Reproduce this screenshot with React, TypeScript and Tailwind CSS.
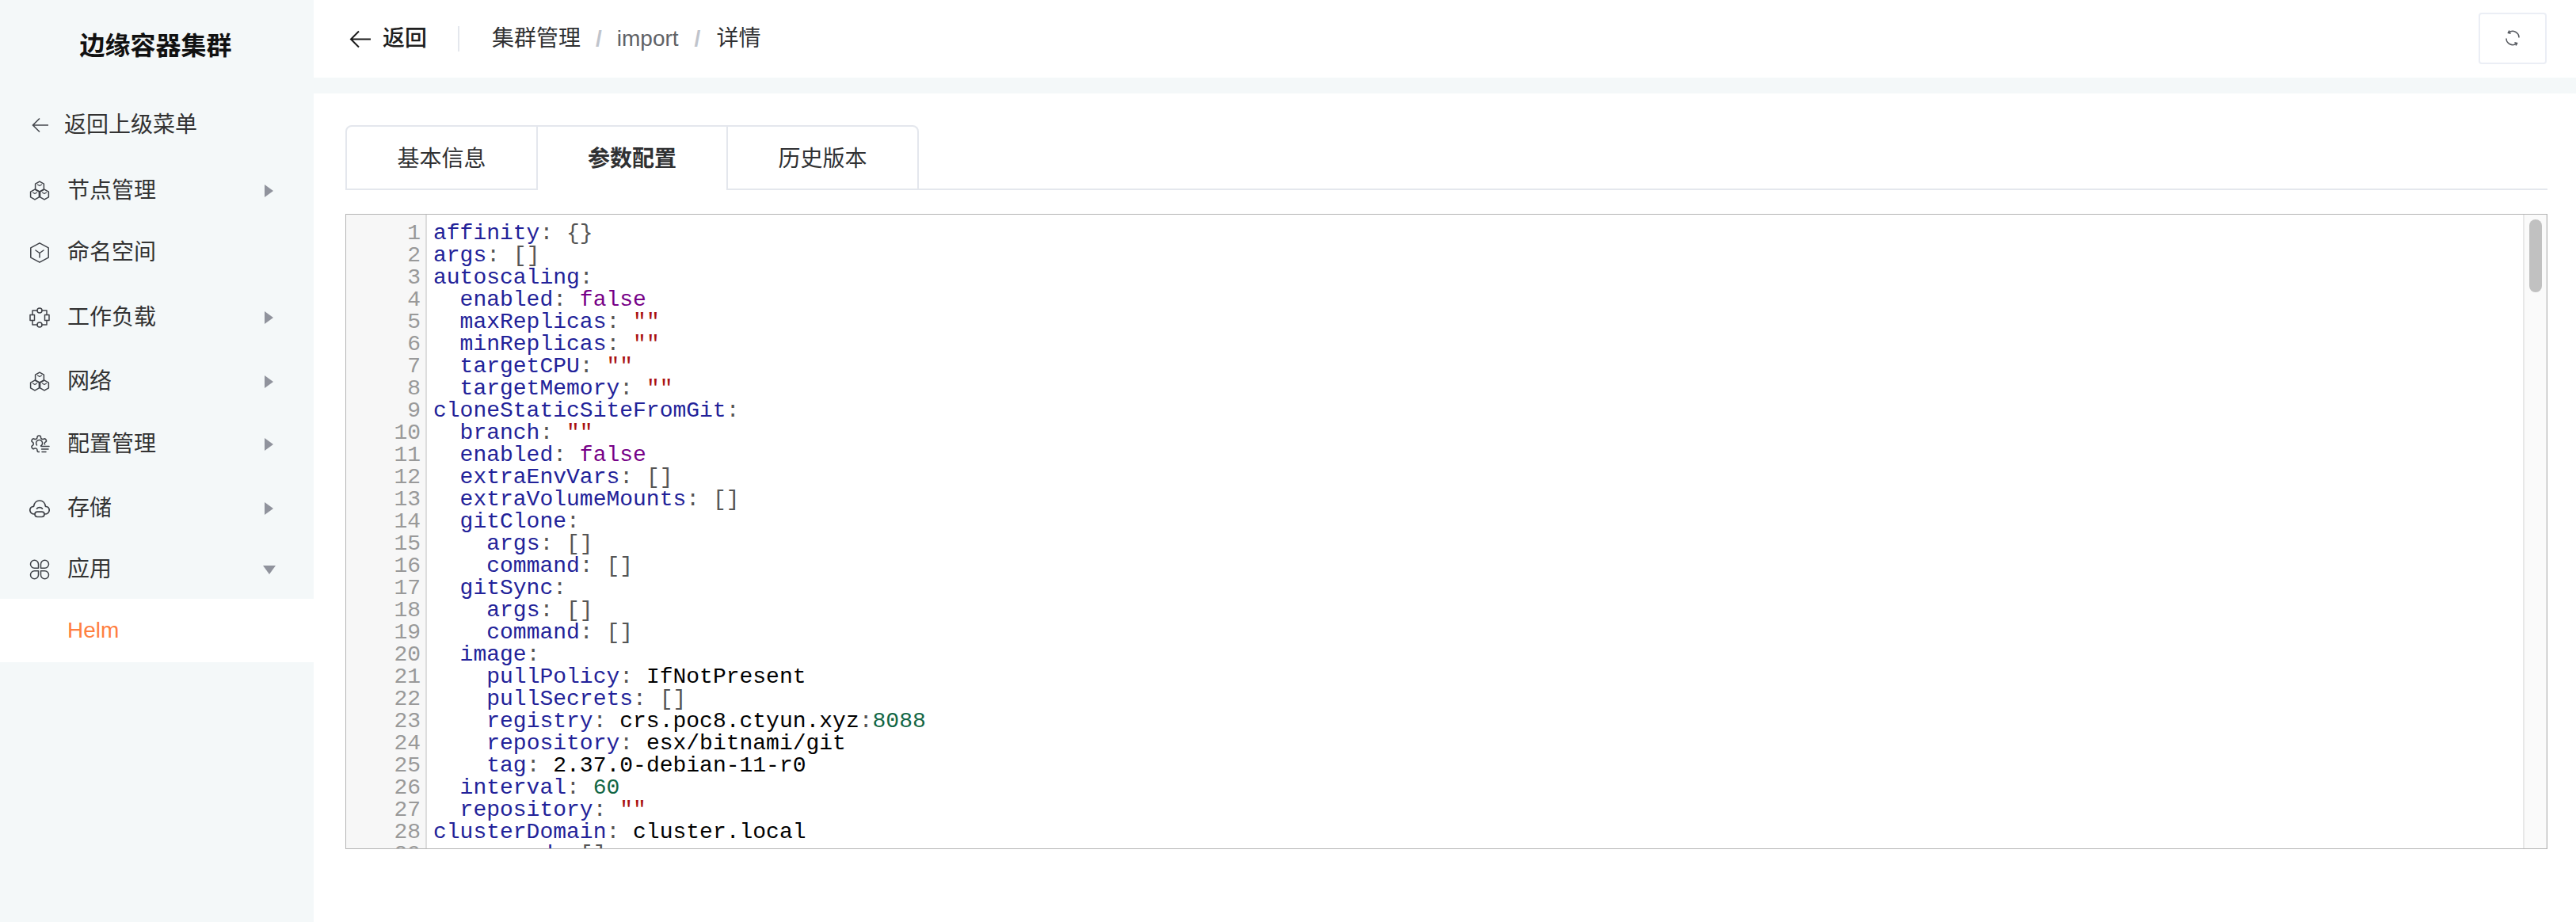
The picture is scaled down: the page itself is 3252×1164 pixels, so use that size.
import { ReactNode } from 'react';

const cjk = "font-['Liberation_Sans','Noto_Sans_CJK_SC',sans-serif]";

const yaml = `affinity: {}
args: []
autoscaling:
  enabled: false
  maxReplicas: ""
  minReplicas: ""
  targetCPU: ""
  targetMemory: ""
cloneStaticSiteFromGit:
  branch: ""
  enabled: false
  extraEnvVars: []
  extraVolumeMounts: []
  gitClone:
    args: []
    command: []
  gitSync:
    args: []
    command: []
  image:
    pullPolicy: IfNotPresent
    pullSecrets: []
    registry: crs.poc8.ctyun.xyz:8088
    repository: esx/bitnami/git
    tag: 2.37.0-debian-11-r0
  interval: 60
  repository: ""
clusterDomain: cluster.local
  command: []`.split('\n');

const Value = ({ text }: { text: string }) => {
  if (text === 'false') return <span className="text-[#770088]">{text}</span>;
  if (text === '""') return <span className="text-[#aa1111]">{text}</span>;
  if (text === '[]' || text === '{}') return <span className="text-[#555555]">{text}</span>;
  if (/^\d+$/.test(text)) return <span className="text-[#116644]">{text}</span>;
  if (text.endsWith(':8088')) {
    return (
      <span className="text-black">
        {text.slice(0, -5)}
        <span className="text-[#555555]">:</span>
        <span className="text-[#116644]">8088</span>
      </span>
    );
  }
  return <span className="text-black">{text}</span>;
};

const CodeLine = ({ line }: { line: string }) => {
  const idx = line.indexOf(':');
  const rest = line.slice(idx + 1).trim();
  const indent = line.length - line.trimStart().length;
  return (
    <div className="h-[28px] whitespace-pre">
      {' '.repeat(indent)}
      <span className="text-[#222299]">{line.slice(indent, idx)}</span>
      <span className="text-[#555555]">:</span>
      {rest && ' '}
      {rest && <Value text={rest} />}
    </div>
  );
};

const Svg = ({ children }: { children: ReactNode }) => (
  <svg width="26" height="26" viewBox="0 0 26 26" fill="none" stroke="#3f4248" strokeWidth="1.5" strokeLinejoin="round" strokeLinecap="round">
    {children}
  </svg>
);

const Cube = ({ x, y }: { x: number; y: number }) => (
  <g>
    <path d={`M${x} ${y - 6.4}l5.4 3.1v6.6l-5.4 3.1l-5.4-3.1v-6.6z`} />
    <path d={`M${x - 2.6} ${y - 2.4}l2.6 1.5l2.6-1.5`} strokeWidth="1.1" />
  </g>
);

const CubesIcon = () => (
  <Svg>
    <Cube x={13} y={7.5} />
    <Cube x={7} y={17.5} />
    <Cube x={19} y={17.5} />
  </Svg>
);

const NamespaceIcon = () => (
  <Svg>
    <path d="M13 .8l11.2 6.1v12.2L13 25.2L1.8 19.1V6.9z" />
    <path d="M8 10l5 3.5l5-3.5M13 13.5V19" />
  </Svg>
);

const WorkloadIcon = () => (
  <Svg>
    <circle cx="13" cy="4" r="3" />
    <circle cx="13" cy="22" r="3" />
    <rect x="1" y="9.5" width="5.5" height="7" />
    <rect x="19.5" y="9.5" width="5.5" height="7" />
    <path d="M10 4H4v5.5M16 4h6v5.5M4 16.5V22h6M22 16.5V22h-6" />
  </Svg>
);

const GearIcon = () => (
  <Svg>
    <path
      transform="scale(1.02)"
      d="M12.22 2h-.44a2 2 0 0 0-2 2v.18a2 2 0 0 1-1 1.73l-.43.25a2 2 0 0 1-2 0l-.15-.08a2 2 0 0 0-2.73.73l-.22.38a2 2 0 0 0 .73 2.73l.15.1a2 2 0 0 1 1 1.72v.51a2 2 0 0 1-1 1.74l-.15.09a2 2 0 0 0-.73 2.73l.22.38a2 2 0 0 0 2.73.73l.15-.08a2 2 0 0 1 2 0l.43.25a2 2 0 0 1 1 1.73V20a2 2 0 0 0 2 2h.44a2 2 0 0 0 2-2v-.18a2 2 0 0 1 1-1.73l.43-.25a2 2 0 0 1 2 0l.15.08a2 2 0 0 0 2.73-.73l.22-.39a2 2 0 0 0-.73-2.73l-.15-.08a2 2 0 0 1-1-1.74v-.5a2 2 0 0 1 1-1.74l.15-.09a2 2 0 0 0 .73-2.73l-.22-.38a2 2 0 0 0-2.73-.73l-.15.08a2 2 0 0 1-2 0l-.43-.25a2 2 0 0 1-1-1.73V4a2 2 0 0 0-2-2z"
    />
    <rect x="13" y="13.5" width="13" height="12.5" fill="#f4f8f9" stroke="none" />
    <path d="M14.5 15a4 4 0 1 0-5 -1" />
    <path d="M15 15.5h10M15.5 19h8.5M16 22.5h5" />
  </Svg>
);

const CloudIcon = () => (
  <Svg>
    <path d="M6.5 20C3 20 .8 17.8.8 15c0-2.7 2-4.6 4.7-4.6C6 6 9 3 13 3s7 3 7.500 7.400c2.700 0 4.700 1.900 4.700 4.600c0 2.800-2.200 5-5.700 5" strokeWidth="1.7" />
    <rect x="7" y="17.200" width="12" height="6.300" rx="3.150" strokeWidth="1.700" />
    <path d="M9.500 13.200c1.500-2.200 5.500-2.200 7 0" strokeWidth="1.700" />
  </Svg>
);

const AppIcon = () => (
  <Svg>
    <path d="M6.500 1.200a5 5 0 0 1 5 5v5h-5a5 5 0 0 1 0-10z" />
    <path d="M19.500 1.200a5 5 0 0 0-5 5v5h5a5 5 0 0 0 0-10z" />
    <path d="M6.500 24.800a5 5 0 0 0 5-5v-5h-5a5 5 0 0 0 0 10z" />
    <path d="M19.500 24.800a5 5 0 0 1-5-5v-5h5a5 5 0 0 1 0 10z" />
  </Svg>
);

const RightTri = () => (
  <svg width="11" height="16" viewBox="0 0 11 16"><path d="M0 0l11 8l-11 8z" fill="#90939d" /></svg>
);

const DownTri = () => (
  <svg width="16" height="11" viewBox="0 0 16 11"><path d="M0 0h16l-8 11z" fill="#90939d" /></svg>
);

const MenuRow = ({ icon, label, arrow, h }: { icon: ReactNode; label: string; arrow?: 'right' | 'down'; h: string }) => (
  <div className={`${h} flex items-center pl-[37px] ${arrow === 'down' ? 'pr-[48px]' : 'pr-[51px]'} text-[28px] text-[#333333]`}>
    <span className="w-[26px] h-[26px] mr-[22px]">{icon}</span>
    <span>{label}</span>
    <span className="ml-auto flex">
      {arrow === 'right' && <RightTri />}
      {arrow === 'down' && <DownTri />}
    </span>
  </div>
);

export default function App() {
  return (
    <div className={`flex min-h-[1164px] bg-white ${cjk}`}>
      <aside className="w-[396px] shrink-0 bg-[#f4f8f9]">
        <div className="h-[116px] flex items-center justify-center pr-[3px] text-[32px] font-bold text-[#111111]">边缘容器集群</div>
        <div className="h-[82px] pt-[2px] flex items-center pl-[40px] text-[28px] text-[#333333]">
          <svg width="21" height="20" viewBox="0 0 21 20" fill="none" stroke="#44474d" strokeWidth="1.6" className="mr-[20px]">
            <path d="M21 10H1.500M10 1.500L1.500 10l8.500 8.500" />
          </svg>
          返回上级菜单
        </div>
        <MenuRow h="h-[86px]" icon={<CubesIcon />} label="节点管理" arrow="right" />
        <MenuRow h="h-[76px] pb-[6px]" icon={<NamespaceIcon />} label="命名空间" />
        <MenuRow h="h-[82px]" icon={<WorkloadIcon />} label="工作负载" arrow="right" />
        <MenuRow h="h-[80px]" icon={<CubesIcon />} label="网络" arrow="right" />
        <MenuRow h="h-[80px] pb-[2px]" icon={<GearIcon />} label="配置管理" arrow="right" />
        <MenuRow h="h-[80px]" icon={<CloudIcon />} label="存储" arrow="right" />
        <MenuRow h="h-[74px]" icon={<AppIcon />} label="应用" arrow="down" />
        <div className="h-[80px] bg-white flex items-center pl-[85px] text-[28px] text-[#ff7f3f]">Helm</div>
      </aside>

      <main className="flex-1 flex flex-col">
        <header className="h-[98px] flex items-center pl-[45px] pr-[37px]">
          <svg width="27" height="23" viewBox="0 0 27 23" fill="none" stroke="#1a1a1a" strokeWidth="2" className="mr-[15px]">
            <path d="M27 11.500H2M12 1.500L2 11.500l10 10" />
          </svg>
          <span className="text-[28px] font-medium text-[#1f1f1f]">返回</span>
          <span className="w-[2px] h-[32px] bg-[#e4e7ed] ml-[39px] mr-[41px]" />
          <nav className="flex items-center text-[28px]">
            <span className="text-[#303133]">集群管理</span>
            <span className="mx-[19px] font-bold text-[#c0c4cc]">/</span>
            <span className="text-[#606266]">import</span>
            <span className="mx-[20px] font-bold text-[#c0c4cc]">/</span>
            <span className="text-[#303133]">详情</span>
          </nav>
          <button className="ml-auto w-[86px] h-[65px] mb-[2px] flex items-center justify-center border-2 border-[#ebeef5] rounded-[4px]">
            <svg width="20" height="20" viewBox="0 0 20 20" fill="none" stroke="#55585e" strokeWidth="1.500">
              <path d="M5 3.200A8 8 0 0 1 18 9.500M15 16.800A8 8 0 0 1 2 10.500" />
              <path d="M5.800 .5L4.400 3.400L7.600 4.300M14.200 19.500l1.400-2.900l-3.200-.9" />
            </svg>
          </button>
        </header>
        <div className="h-[20px] bg-[#f4f8f9]" />

        <section className="pt-[40px] pl-[40px] pr-[36px]">
          <div className="flex h-[82px] border-b-2 border-[#e4e7ed]">
            <div className="flex h-[82px] border-2 border-b-0 border-[#e4e7ed] rounded-t-[8px]">
              <div className="w-[241px] h-[78px] pt-[4px] border-r-2 border-[#e4e7ed] flex items-center justify-center text-[28px] text-[#303133]">基本信息</div>
              <div className="w-[240px] h-[80px] pt-[2px] border-r-2 border-[#e4e7ed] bg-white flex items-center justify-center text-[28px] font-bold text-[#303133]">参数配置</div>
              <div className="w-[239px] h-[78px] pt-[4px] flex items-center justify-center text-[28px] text-[#303133]">历史版本</div>
            </div>
          </div>

          <div className="mt-[30px] h-[802px] border border-[#b5b5b5] flex overflow-hidden font-['Liberation_Mono',monospace] text-[28px] leading-[28px]">
            <div className="w-[102px] shrink-0 bg-[#f7f7f7] border-r-2 border-[#dddddd] pt-[10px] pr-[6px] text-right text-[#999999]">
              {yaml.map((_, i) => (
                <div key={i} className="h-[28px]">{i + 1}</div>
              ))}
            </div>
            <div className="flex-1 pt-[10px] pl-[8px]">
              {yaml.map((line, i) => (
                <CodeLine key={i} line={line} />
              ))}
            </div>
            <div className="w-[30px] shrink-0 bg-[#fafafa] border-l-2 border-r border-[#e8e8e8] pt-[6px] pl-[6px]">
              <div className="w-[16px] h-[92px] rounded-full bg-[#c1c1c1]" />
            </div>
          </div>
        </section>
      </main>
    </div>
  );
}
